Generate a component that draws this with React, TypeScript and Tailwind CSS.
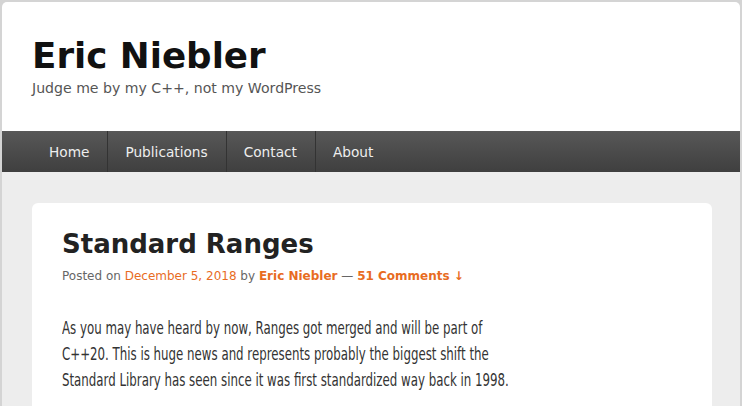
export default function App() {
  const nav = ['Home', 'Publications', 'Contact', 'About'];

  return (
    <div className="min-h-[406px] bg-[#d4d4d4] px-[2px] pt-[2px]" style={{ fontFamily: '"DejaVu Sans", Verdana, sans-serif' }}>
      <div className="rounded-t-[5px] bg-white overflow-hidden">
        <header className="pl-[30px] pt-[34px] h-[129px]">
          <h1 className="text-[35.7px] leading-[40px] font-bold text-[#111]">Eric Niebler</h1>
          <p className="text-[14.1px] leading-[20px] text-[#555] mt-[2px]">Judge me by my C++, not my WordPress</p>
        </header>

        <nav className="h-[41px] flex pl-[30px] bg-gradient-to-b from-[#585858] to-[#3f3f3f]">
          {nav.map((item, i) => (
            <a
              key={item}
              className={`flex items-center pl-[17px] pr-[18px] pt-[1px] text-[13.7px] text-[#eeeeee] ${i < nav.length - 1 ? 'border-r border-[#333]' : ''}`}
            >
              {item}
            </a>
          ))}
        </nav>

        <main className="bg-[#ededed] pl-[30px] pr-[28px] pt-[31px] pb-[40px]">
          <article className="bg-white rounded-[6px] px-[30px] pt-[25px] pb-[30px]">
            <h2 className="text-[26px] leading-[32px] font-bold text-[#222]">Standard Ranges</h2>
            <div className="text-[12px] leading-[18px] text-[#666] mt-[7px]">
              Posted on <span className="text-[#e86c1f]">December 5, 2018</span> by{' '}
              <span className="text-[#e86c1f] font-bold">Eric Niebler</span> —{' '}
              <span className="text-[#e86c1f] font-bold">51 Comments ↓</span>
            </div>
            <div
              className="mt-[30px] text-[17px] leading-[26px] text-[#333] origin-left scale-x-[0.772]"
              style={{ fontFamily: '"DejaVu Sans Condensed", "DejaVu Sans", sans-serif' }}
            >
              <p className="whitespace-nowrap">As you may have heard by now, Ranges got merged and will be part of</p>
              <p className="whitespace-nowrap">C++20. This is huge news and represents probably the biggest shift the</p>
              <p className="whitespace-nowrap">Standard Library has seen since it was first standardized way back in 1998.</p>
            </div>
          </article>
        </main>
      </div>
    </div>
  );
}
